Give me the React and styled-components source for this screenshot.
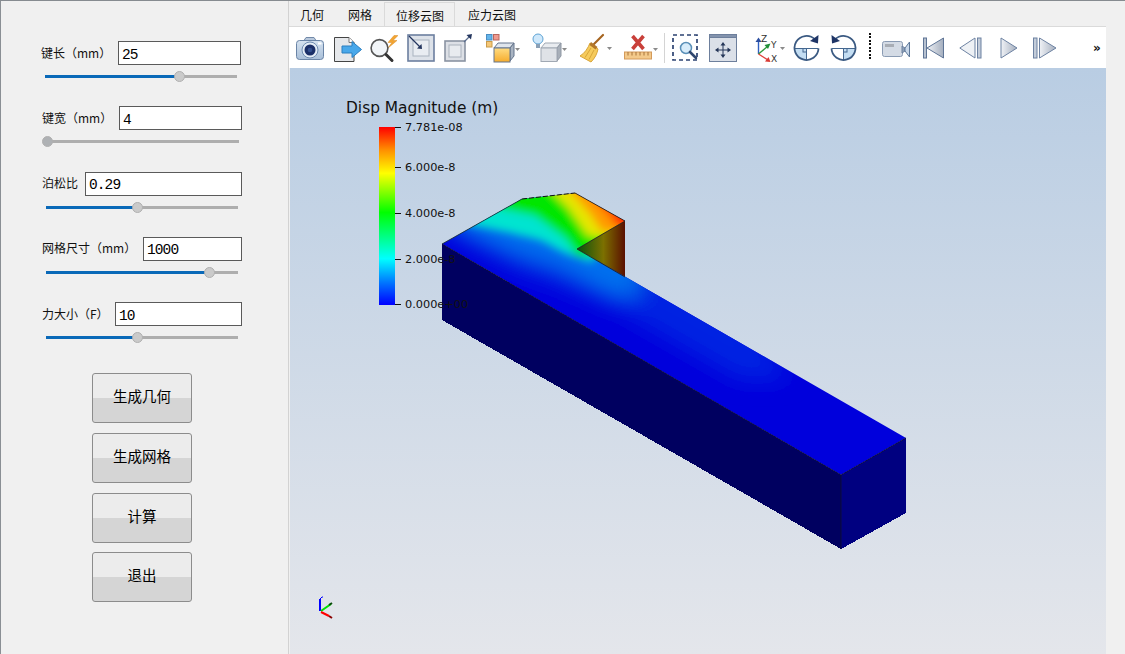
import React from "react";
import styled, { createGlobalStyle } from "styled-components";

const CJK = '"Noto Sans CJK SC", "Liberation Sans", sans-serif';

const GlobalStyle = createGlobalStyle`
    html, body {
        margin: 0;
        padding: 0;
        background: #f0f0f0;
        overflow: hidden;
    }
`;

const Window = styled.div`
    display: flex;
    width: 1125px;
    height: 654px;
    box-sizing: border-box;
    border-top: 1px solid #868b90;
    background: #f0f0f0;
    font-family: ${CJK};
    overflow: hidden;
`;

const LeftPanel = styled.div`
    flex: none;
    display: flex;
    flex-direction: column;
    box-sizing: border-box;
    width: 289px;
    padding: 40px 0 0 40px;
    border-left: 1px solid #8a8f94;
    border-right: 1px solid #d2d2d2;
`;

const Field = styled.div`
    height: 65.25px;
    width: 200px;
    margin-left: ${(p) => p.$inset}px;
`;

const FieldRow = styled.div`
    display: flex;
    align-items: center;
    height: 24px;
`;

const FieldLabel = styled.label`
    flex: none;
    width: ${(p) => p.$width}px;
    font-size: 12px;
    line-height: 20px;
    margin-top: -1px;
    color: #111;
    white-space: nowrap;
`;

const FieldInput = styled.input`
    flex: 1;
    min-width: 0;
    box-sizing: border-box;
    height: 24px;
    padding: 3px 3px 0;
    border: 1px solid #5a5a5a;
    border-radius: 0;
    outline: none;
    background: #fff;
    color: #000;
    font-family: "Liberation Mono", monospace;
    font-size: 14.5px;
    letter-spacing: -0.9px;
`;

const Slider = styled.div`
    position: relative;
    display: flex;
    align-items: center;
    width: 192px;
    height: 13px;
    margin: 5px 0 0 ${(p) => p.$offset}px;
`;

const SliderTrack = styled.div`
    width: 100%;
    height: 3px;
    background: #aeaeae;
`;

const SliderFill = styled.div`
    height: 100%;
    background: #0a69b8;
`;

const SliderKnob = styled.div`
    position: absolute;
    top: 1px;
    box-sizing: border-box;
    width: 11px;
    height: 11px;
    margin-left: -5.5px;
    border: 1px solid #b0b0b0;
    border-radius: 50%;
    background: ${(p) => (p.$atStart ? "#aeb1b4" : "#cacaca")};
`;

const ButtonColumn = styled.div`
    display: flex;
    flex-direction: column;
    gap: 9.67px;
    margin: 6px 0 0 51px;
`;

const ActionButton = styled.button`
    box-sizing: border-box;
    width: 100px;
    height: 50px;
    padding: 0 0 5px;
    border: 1px solid #8c8c8c;
    border-radius: 3px;
    background: linear-gradient(#ececec 0, #ececec 50%, #d5d5d5 50%, #d5d5d5 100%);
    color: #000;
    font-family: ${CJK};
    font-size: 14.5px;
`;

const RightColumn = styled.div`
    flex: 1;
    display: flex;
    flex-direction: column;
    min-width: 0;
`;

const TabBar = styled.div`
    display: flex;
    height: 26px;
    box-sizing: border-box;
    padding-top: 1px;
    border-bottom: 1px solid #dadada;
    width: 817px;
    & > :first-child {
        margin-left: -1px;
    }
`;

const Tab = styled.div`
    box-sizing: border-box;
    height: 25px;
    padding: ${(p) => (p.$selected ? "0 10px 0 11px" : "0 12px")};
    margin-right: ${(p) => (p.$selected ? 1 : 0)}px;
    border: ${(p) => (p.$selected ? "1px solid #dadada" : "none")};
    border-bottom: none;
    font-size: 12px;
    line-height: 25px;
    color: #111;
`;

const Toolbar = styled.div`
    display: flex;
    align-items: center;
    box-sizing: border-box;
    width: 817px;
    height: 41px;
    padding-left: 7px;
    background: #fff;
`;

const Tool = styled.svg`
    flex: none;
    width: ${(p) => p.$w}px;
    height: 30px;
    margin-left: ${(p) => p.$gap || 0}px;
`;

const More = styled.span`
    margin-left: 36px;
    font-family: "DejaVu Sans", sans-serif;
    font-size: 12px;
    font-weight: bold;
    line-height: 12px;
    color: #111;
`;

const Viewport = styled.div`
    position: relative;
    width: 816px;
    height: 586px;
    margin-left: 1px;
    background: linear-gradient(#b9cde3, #e4e6eb);
`;

const Scene = styled.svg`
    display: block;
    width: 816px;
    height: 586px;
`;

const ScalarBar = styled.div`
    position: absolute;
    left: 56px;
    top: 30px;
    font-family: "DejaVu Sans", sans-serif;
    color: #111;
`;

const ScalarTitle = styled.div`
    font-size: 15.4px;
    line-height: 20px;
    white-space: nowrap;
`;

const ScalarBody = styled.div`
    display: flex;
    margin: 9px 0 0 33px;
`;

const ColorRamp = styled.div`
    width: 16px;
    height: 178px;
    background: linear-gradient(#ff0000 0, #ff9000 13%, #ffff00 26%, #00ff00 48%, #00ffff 74%, #0070ff 88%, #0000ff 100%);
`;

const Ticks = styled.div`
    position: relative;
    width: 80px;
`;

const Tick = styled.div`
    position: absolute;
    left: 0;
    display: flex;
    align-items: center;
    height: 14px;
    margin-top: -7px;
    font-size: 11.3px;
    white-space: nowrap;
    &::before {
        content: "";
        width: 6px;
        height: 1px;
        margin-right: 4px;
        background: #111;
    }
`;

const fields = [
    { label: "键长（mm）", value: "25", inset: 0, labelWidth: 77, offset: 4, percent: 70 },
    { label: "键宽（mm）", value: "4", inset: 1, labelWidth: 77, offset: 5, percent: 0.5 },
    { label: "泊松比", value: "0.29", inset: 1, labelWidth: 43, offset: 4, percent: 47.6 },
    { label: "网格尺寸（mm）", value: "1000", inset: 1, labelWidth: 101, offset: 4, percent: 85 },
    { label: "力大小（F）", value: "10", inset: 1, labelWidth: 73, offset: 4, percent: 47.6 },
];

const actions = ["生成几何", "生成网格", "计算", "退出"];
const tabs = ["几何", "网格", "位移云图", "应力云图"];

const ticks = [
    { text: "7.781e-08", at: 0 },
    { text: "6.000e-8", at: 40.5 },
    { text: "4.000e-8", at: 86.5 },
    { text: "2.000e-8", at: 132.5 },
    { text: "0.000e+00", at: 177.5 },
];

const CameraIcon = () => (
    <Tool $w={28} viewBox="0 0 28 30">
        <defs>
            <linearGradient id="camBody" x1="0" y1="0" x2="0" y2="1">
                <stop offset="0" stopColor="#d5e2f0" />
                <stop offset="1" stopColor="#a9bfd8" />
            </linearGradient>
        </defs>
        <path d="M8 7.5 L10 4.5 H18 L20 7.5 Z" fill="#b8c8dc" stroke="#7189a8" />
        <rect x="0.5" y="7.5" width="27" height="19" rx="3" fill="url(#camBody)" stroke="#6a84a6" />
        <circle cx="14" cy="17" r="8" fill="#e4edf6" stroke="#6f8bb0" />
        <circle cx="14" cy="17" r="5.5" fill="#1b2f68" />
        <circle cx="14" cy="17" r="2.3" fill="#33508f" />
        <rect x="22" y="9.5" width="3.5" height="2" fill="#fff" />
    </Tool>
);

const ExportIcon = () => (
    <Tool $w={28} $gap={10} viewBox="0 0 28 30">
        <path d="M0.5 4.5 H15 L20 9.5 V28.5 H0.5 Z" fill="#e6e8eb" stroke="#444" />
        <path d="M15 4.5 V9.5 H20" fill="#fff" stroke="#777" />
        <path d="M8 13 H18 V8.5 L27.5 16.5 L18 24.5 V20 H8 Z" fill="#49a8ea" stroke="#2b7fc0" />
    </Tool>
);

const ProbeIcon = () => (
    <Tool $w={28} $gap={8} viewBox="0 0 28 30">
        <path d="M24 2.5 L18 9.5 H22 L17.5 15.5 L27 7.5 H23 L28 2.5 Z" fill="#f3a431" stroke="#d98d25" strokeWidth="0.5" />
        <circle cx="9.5" cy="15" r="8.4" fill="#f2f5f8" stroke="#555" strokeWidth="1.6" />
        <path d="M16 21.5 L22 27.5" stroke="#333" strokeWidth="3" strokeLinecap="round" />
    </Tool>
);

const ShrinkIcon = () => (
    <Tool $w={28} $gap={9} viewBox="0 0 28 30">
        <rect x="1" y="2" width="26" height="26" fill="#dde2e9" stroke="#6c7f9f" strokeWidth="1.6" />
        <rect x="6" y="7" width="16" height="16" fill="#e9edf2" stroke="#aab3c0" />
        <path d="M2 3 L13 14" stroke="#24365f" strokeWidth="1.2" />
        <path d="M15 16 L14.5 11 L10 15.5 Z" fill="#24365f" />
    </Tool>
);

const GrowIcon = () => (
    <Tool $w={28} $gap={9} viewBox="0 0 28 30">
        <rect x="1" y="8" width="20" height="20" fill="#dde0e6" stroke="#8a93a2" strokeWidth="1.6" />
        <rect x="5" y="12" width="12" height="12" fill="#e8ebef" stroke="#aab1bc" />
        <path d="M20 9 L26 3" stroke="#5b6d8e" strokeWidth="1.3" />
        <path d="M28 1 L22.5 2 L27 6.5 Z" fill="#24365f" />
    </Tool>
);

const GhostCubeArrow = ({ x, y }) => <path d={`M${x} ${y} h5 l-2.5 3 Z`} fill="#8a8a8a" />;

const RepresentationIcon = () => (
    <Tool $w={34} $gap={14} viewBox="0 0 34 30">
        <defs>
            <linearGradient id="cubeFront" x1="0" y1="0" x2="0" y2="1">
                <stop offset="0" stopColor="#ffdc82" />
                <stop offset="1" stopColor="#f6ac2c" />
            </linearGradient>
        </defs>
        <rect x="0.5" y="1.5" width="5.5" height="5.5" fill="#63b4ea" stroke="#4a8dc2" />
        <rect x="7.5" y="1.5" width="5.5" height="5.5" fill="#ee9a90" stroke="#b9685f" />
        <rect x="0.5" y="8.5" width="5.5" height="5.5" fill="#f5c777" stroke="#c99b4b" />
        <path d="M8 15 L12 10 H28 L24 15 Z" fill="#dfe5ec" stroke="#65758c" />
        <path d="M24 15 L28 10 V23 L24 28 Z" fill="#a9b4c2" stroke="#65758c" />
        <rect x="8" y="15" width="16" height="14" fill="url(#cubeFront)" stroke="#65758c" />
        <GhostCubeArrow x={29} y={15} />
    </Tool>
);

const LightIcon = () => (
    <Tool $w={35} $gap={12} viewBox="0 0 35 30">
        <circle cx="6" cy="6" r="5" fill="#cfe8fb" stroke="#5ea3d4" />
        <rect x="4" y="11" width="4" height="4" fill="#8aa0b6" />
        <path d="M9 15 L13 10 H29 L25 15 Z" fill="#e9ecf0" stroke="#a0a8b3" />
        <path d="M25 15 L29 10 V23 L25 28 Z" fill="#a8afb9" stroke="#8f98a4" />
        <rect x="9" y="15" width="16" height="13.5" fill="#dfe2e7" stroke="#a0a8b3" />
        <GhostCubeArrow x={30} y={15} />
    </Tool>
);

const BroomIcon = () => (
    <Tool $w={33} $gap={12} viewBox="0 0 33 30">
        <path d="M15 11 L24 2" stroke="#a5641f" strokeWidth="2.2" strokeLinecap="round" />
        <path d="M11 10 L19 16 C18 21 16 25 12 29 L1 23 C6 20 9 15 11 10 Z" fill="#f6cb5c" stroke="#d9a53a" />
        <path d="M12 9 L18.5 14 L16.5 16.5 L10.5 12 Z" fill="#b3782a" />
        <path d="M6 24.5 L12 15 M10 26.5 L15 17" stroke="#cf9c32" strokeWidth="0.8" />
        <GhostCubeArrow x={28} y={14} />
    </Tool>
);

const RulerIcon = () => (
    <Tool $w={34} $gap={12} viewBox="0 0 34 30">
        <path d="M8.5 3 L19.5 16 M19.5 3 L8.5 16" stroke="#c9403a" strokeWidth="3.6" />
        <rect x="0.5" y="19" width="27" height="7" fill="#f3c98a" stroke="#d49a5a" />
        <path d="M4 19 V22.5 M8 19 V22.5 M12 19 V22.5 M16 19 V22.5 M20 19 V22.5 M24 19 V22.5" stroke="#a8753a" />
        <GhostCubeArrow x={29} y={15} />
    </Tool>
);

const ToolSeparator = styled.div`
    flex: none;
    width: 1px;
    height: 30px;
    margin-left: 6px;
    background: #d4d4d4;
`;

const ZoomBoxIcon = () => (
    <Tool $w={26} $gap={7} viewBox="0 0 26 30">
        <rect x="1" y="2" width="24" height="25" fill="none" stroke="#2d4372" strokeWidth="1.7" strokeDasharray="4 3" />
        <circle cx="14" cy="15" r="5.5" fill="#d8ecfa" stroke="#5b90b8" strokeWidth="1.5" />
        <path d="M18 19 L24 25" stroke="#30476f" strokeWidth="2.6" strokeLinecap="round" />
    </Tool>
);

const MoveIcon = () => (
    <Tool $w={28} $gap={11} viewBox="0 0 28 30">
        <rect x="0.5" y="1.5" width="27" height="27" fill="#dbe0e8" stroke="#6d7f9c" />
        <rect x="0.5" y="1.5" width="27" height="3" fill="#8393ad" stroke="#6d7f9c" />
        <path d="M14 9 L11.5 12.5 H13.5 V16.5 H9.5 V14.5 L6 17 L9.5 19.5 V17.5 H13.5 V21.5 H11.5 L14 25 L16.5 21.5 H14.5 V17.5 H18.5 V19.5 L22 17 L18.5 14.5 V16.5 H14.5 V12.5 H16.5 Z" fill="#243557" />
    </Tool>
);

const AxisText = styled.text`
    font-family: "DejaVu Sans", sans-serif;
    font-size: 9px;
    fill: #333;
`;

const AxesIcon = () => (
    <Tool $w={30} $gap={18} viewBox="0 0 30 30">
        <path d="M3.5 21 V8" stroke="#2f5fc0" strokeWidth="1.4" />
        <path d="M0.5 9 L3.5 4.5 L6.5 9 Z" fill="#2b4ea0" />
        <path d="M3.5 21 L13 13" stroke="#2e9a3c" strokeWidth="1.4" />
        <path d="M15.5 10.5 L9.5 12 L13 16 Z" fill="#1f8f38" />
        <path d="M3.5 21 L13 27" stroke="#e0413a" strokeWidth="1.4" />
        <path d="M15.5 29 L10 28.5 L13.5 24 Z" fill="#d93a34" />
        <AxisText x="6" y="9">Z</AxisText>
        <AxisText x="16" y="15">Y</AxisText>
        <AxisText x="16" y="29">X</AxisText>
        <GhostCubeArrow x={25} y={14} />
    </Tool>
);

const RotateIcon = ({ mirror, gap }) => (
    <Tool $w={27} $gap={gap} viewBox="0 0 27 30">
        <g transform={mirror ? "translate(27 0) scale(-1 1)" : undefined}>
            <path d="M13.5 15.5 H1.5 A12 12 0 0 0 13.5 27.5 Z" fill="#c3ddf2" />
            <path d="M1.5 15.5 H25.5" stroke="#44678f" strokeWidth="1" />
            <path d="M13.5 15.5 V27.5" stroke="#44678f" strokeWidth="1" />
            <rect x="10" y="15.5" width="3.5" height="3.5" fill="none" stroke="#44678f" />
            <path d="M22 6.5 A12 12 0 1 0 25.5 15.5" fill="none" stroke="#3b5a82" strokeWidth="1.8" />
            <path d="M25.5 2 L25 10.5 L17 8 Z" fill="#1f3566" />
        </g>
    </Tool>
);

const DottedSeparator = styled.div`
    flex: none;
    width: 2px;
    height: 27px;
    margin: 0 0 3px 12px;
    background: repeating-linear-gradient(#111 0, #111 2px, transparent 2px, transparent 3.5px);
`;

const VideoIcon = () => (
    <Tool $w={28} $gap={11} viewBox="0 0 28 30">
        <rect x="0.5" y="8.5" width="20" height="15" rx="2" fill="#d4dbe5" stroke="#8a9bb3" />
        <rect x="3" y="11" width="9" height="3" fill="#a8adb5" />
        <path d="M20 13 L23 15 V18 L20 20 Z" fill="#8ea0b8" stroke="#6d819f" />
        <path d="M23 15 L27.5 9 V24 L23 18 Z" fill="#c9d8ea" stroke="#5e7899" />
    </Tool>
);

const triGradient = (id) => (
    <defs>
        <linearGradient id={id} x1="0" y1="0" x2="1" y2="0">
            <stop offset="0" stopColor="#f0f2f6" />
            <stop offset="1" stopColor="#a4aebe" />
        </linearGradient>
    </defs>
);

const FirstIcon = () => (
    <Tool $w={21} $gap={13} viewBox="0 0 21 30">
        {triGradient("firstTri")}
        <rect x="0.5" y="5" width="3" height="20" fill="#b7c1d0" stroke="#5f7596" />
        <path d="M20.5 5 V25 L4 15 Z" fill="url(#firstTri)" stroke="#5f7596" />
    </Tool>
);

const PrevIcon = () => (
    <Tool $w={23} $gap={15} viewBox="0 0 23 30">
        {triGradient("prevTri")}
        <path d="M16 5 V25 L0.8 15 Z" fill="#eef1f5" stroke="#6d82a2" />
        <rect x="18.5" y="5" width="3.5" height="20" fill="#c3ccd9" stroke="#6d82a2" />
    </Tool>
);

const PlayIcon = () => (
    <Tool $w={18} $gap={18} viewBox="0 0 18 30">
        {triGradient("playTri")}
        <path d="M1 5 V25 L17 15 Z" fill="url(#playTri)" stroke="#6d82a2" />
    </Tool>
);

const NextIcon = () => (
    <Tool $w={24} $gap={15} viewBox="0 0 24 30">
        {triGradient("nextTri")}
        <rect x="0.5" y="5" width="3.5" height="20" fill="#c3ccd9" stroke="#6d82a2" />
        <path d="M6.5 5 V25 L23 15 Z" fill="url(#nextTri)" stroke="#6d82a2" />
    </Tool>
);

// the contour bands on the deformed top face, cool to hot
const coolBands = [
    { fill: "#0024e2", d: "M442 226 L520 272 L600 300 L740 380 L790 380 L640 170 L450 170 Z" },
    { fill: "#0070ee", d: "M452 228 L510 252 L560 268 L610 296 L640 296 L640 170 L452 170 Z" },
];

const hotBands = [
    { fill: "#00e4d0", d: "M466 224 L507 232 L540 240 L567 254 L592 262 L650 190 L620 170 L466 170 Z" },
    { fill: "#00e600", d: "M488 206 L535 216 L565 238 L578 256 L650 250 L650 170 L488 170 Z" },
    { fill: "#e6e600", d: "M546 186 L570 210 L588 236 L650 240 L650 170 L546 170 Z" },
    { fill: "#ff9a00", d: "M566 186 L590 214 L602 232 L650 232 L650 170 L566 170 Z" },
    { fill: "#ff2a00", d: "M594 198 L612 218 L618 228 L650 228 L650 180 L600 180 Z" },
];

const Model = () => (
    <g shapeRendering="crispEdges">
        <defs>
            <clipPath id="topFace">
                <path d="M442 244 L522 199 L575 193 L625 221 L577 249 L906 438 L841 475 Z" />
            </clipPath>
            <filter id="softWide" x="-30%" y="-30%" width="160%" height="160%">
                <feGaussianBlur stdDeviation="11" />
            </filter>
            <filter id="soften" x="-30%" y="-30%" width="160%" height="160%">
                <feGaussianBlur stdDeviation="4.5" />
            </filter>
            <linearGradient id="notchFace" x1="0" y1="0" x2="1" y2="0">
                <stop offset="0" stopColor="#04520f" />
                <stop offset="0.55" stopColor="#7c7000" />
                <stop offset="1" stopColor="#5a0f00" />
            </linearGradient>
        </defs>
        <path d="M577 249 L625 221 V277 Z" fill="url(#notchFace)" />
        <path d="M442 244 L841 475 V549 L442 320 Z" fill="#000060" />
        <path d="M841 475 L906 438 V513 L841 549 Z" fill="#000080" />
        <g clipPath="url(#topFace)">
            <rect x="430" y="180" width="490" height="310" fill="#0000dc" />
            <g filter="url(#softWide)">
                {coolBands.map((b) => (
                    <path key={b.fill} d={b.d} fill={b.fill} />
                ))}
            </g>
            <g filter="url(#soften)">
                {hotBands.map((b) => (
                    <path key={b.fill} d={b.d} fill={b.fill} />
                ))}
            </g>
        </g>
        <path d="M442 244 L841 475 L906 438 M841 475 V549" fill="none" stroke="#10102a" strokeWidth="0.8" shapeRendering="auto" />
        <path d="M442 244 L522 199" fill="none" stroke="#16302a" strokeWidth="0.8" shapeRendering="auto" />
        <path d="M522 199 L575 193" fill="none" stroke="#111" strokeDasharray="5 2" shapeRendering="auto" />
        <path d="M575 193 L625 221 L577 249 L625 277" fill="none" stroke="#2a1a08" strokeWidth="0.8" shapeRendering="auto" />
    </g>
);

const OrientationAxes = () => (
    <g>
        <path d="M320 611 V599" stroke="#0000ff" strokeWidth="2" />
        <path d="M320 599 L322 597 H323" stroke="#0000ff" fill="none" />
        <path d="M321 611 L331 604" stroke="#00e000" strokeWidth="2" />
        <path d="M329 605 L332 603" stroke="#0a4a0a" strokeWidth="2" />
        <path d="M321 612 L329 616" stroke="#ff0000" strokeWidth="2" />
        <path d="M329 616 L332 618" stroke="#8a0000" strokeWidth="2" />
    </g>
);

export default function App() {
    return (
        <Window>
            <GlobalStyle />
            <LeftPanel>
                {fields.map((f) => (
                    <Field key={f.label} $inset={f.inset}>
                        <FieldRow>
                            <FieldLabel $width={f.labelWidth}>{f.label}</FieldLabel>
                            <FieldInput defaultValue={f.value} />
                        </FieldRow>
                        <Slider $offset={f.offset}>
                            <SliderTrack>
                                <SliderFill style={{ width: `${f.percent}%` }} />
                            </SliderTrack>
                            <SliderKnob $atStart={f.percent < 1} style={{ left: `${f.percent}%` }} />
                        </Slider>
                    </Field>
                ))}
                <ButtonColumn>
                    {actions.map((a) => (
                        <ActionButton key={a}>{a}</ActionButton>
                    ))}
                </ButtonColumn>
            </LeftPanel>
            <RightColumn>
                <TabBar>
                    {tabs.map((t, i) => (
                        <Tab key={t} $selected={i === 2}>{t}</Tab>
                    ))}
                </TabBar>
                <Toolbar>
                    <CameraIcon />
                    <ExportIcon />
                    <ProbeIcon />
                    <ShrinkIcon />
                    <GrowIcon />
                    <RepresentationIcon />
                    <LightIcon />
                    <BroomIcon />
                    <RulerIcon />
                    <ToolSeparator />
                    <ZoomBoxIcon />
                    <MoveIcon />
                    <AxesIcon />
                    <RotateIcon gap={8} />
                    <RotateIcon mirror gap={10} />
                    <DottedSeparator />
                    <VideoIcon />
                    <FirstIcon />
                    <PrevIcon />
                    <PlayIcon />
                    <NextIcon />
                    <More>»</More>
                </Toolbar>
                <Viewport>
                    <Scene viewBox="290 68 816 586">
                        <Model />
                        <OrientationAxes />
                    </Scene>
                    <ScalarBar>
                        <ScalarTitle>Disp Magnitude (m)</ScalarTitle>
                        <ScalarBody>
                            <ColorRamp />
                            <Ticks>
                                {ticks.map((t) => (
                                    <Tick key={t.text} style={{ top: t.at }}>{t.text}</Tick>
                                ))}
                            </Ticks>
                        </ScalarBody>
                    </ScalarBar>
                </Viewport>
            </RightColumn>
        </Window>
    );
}
